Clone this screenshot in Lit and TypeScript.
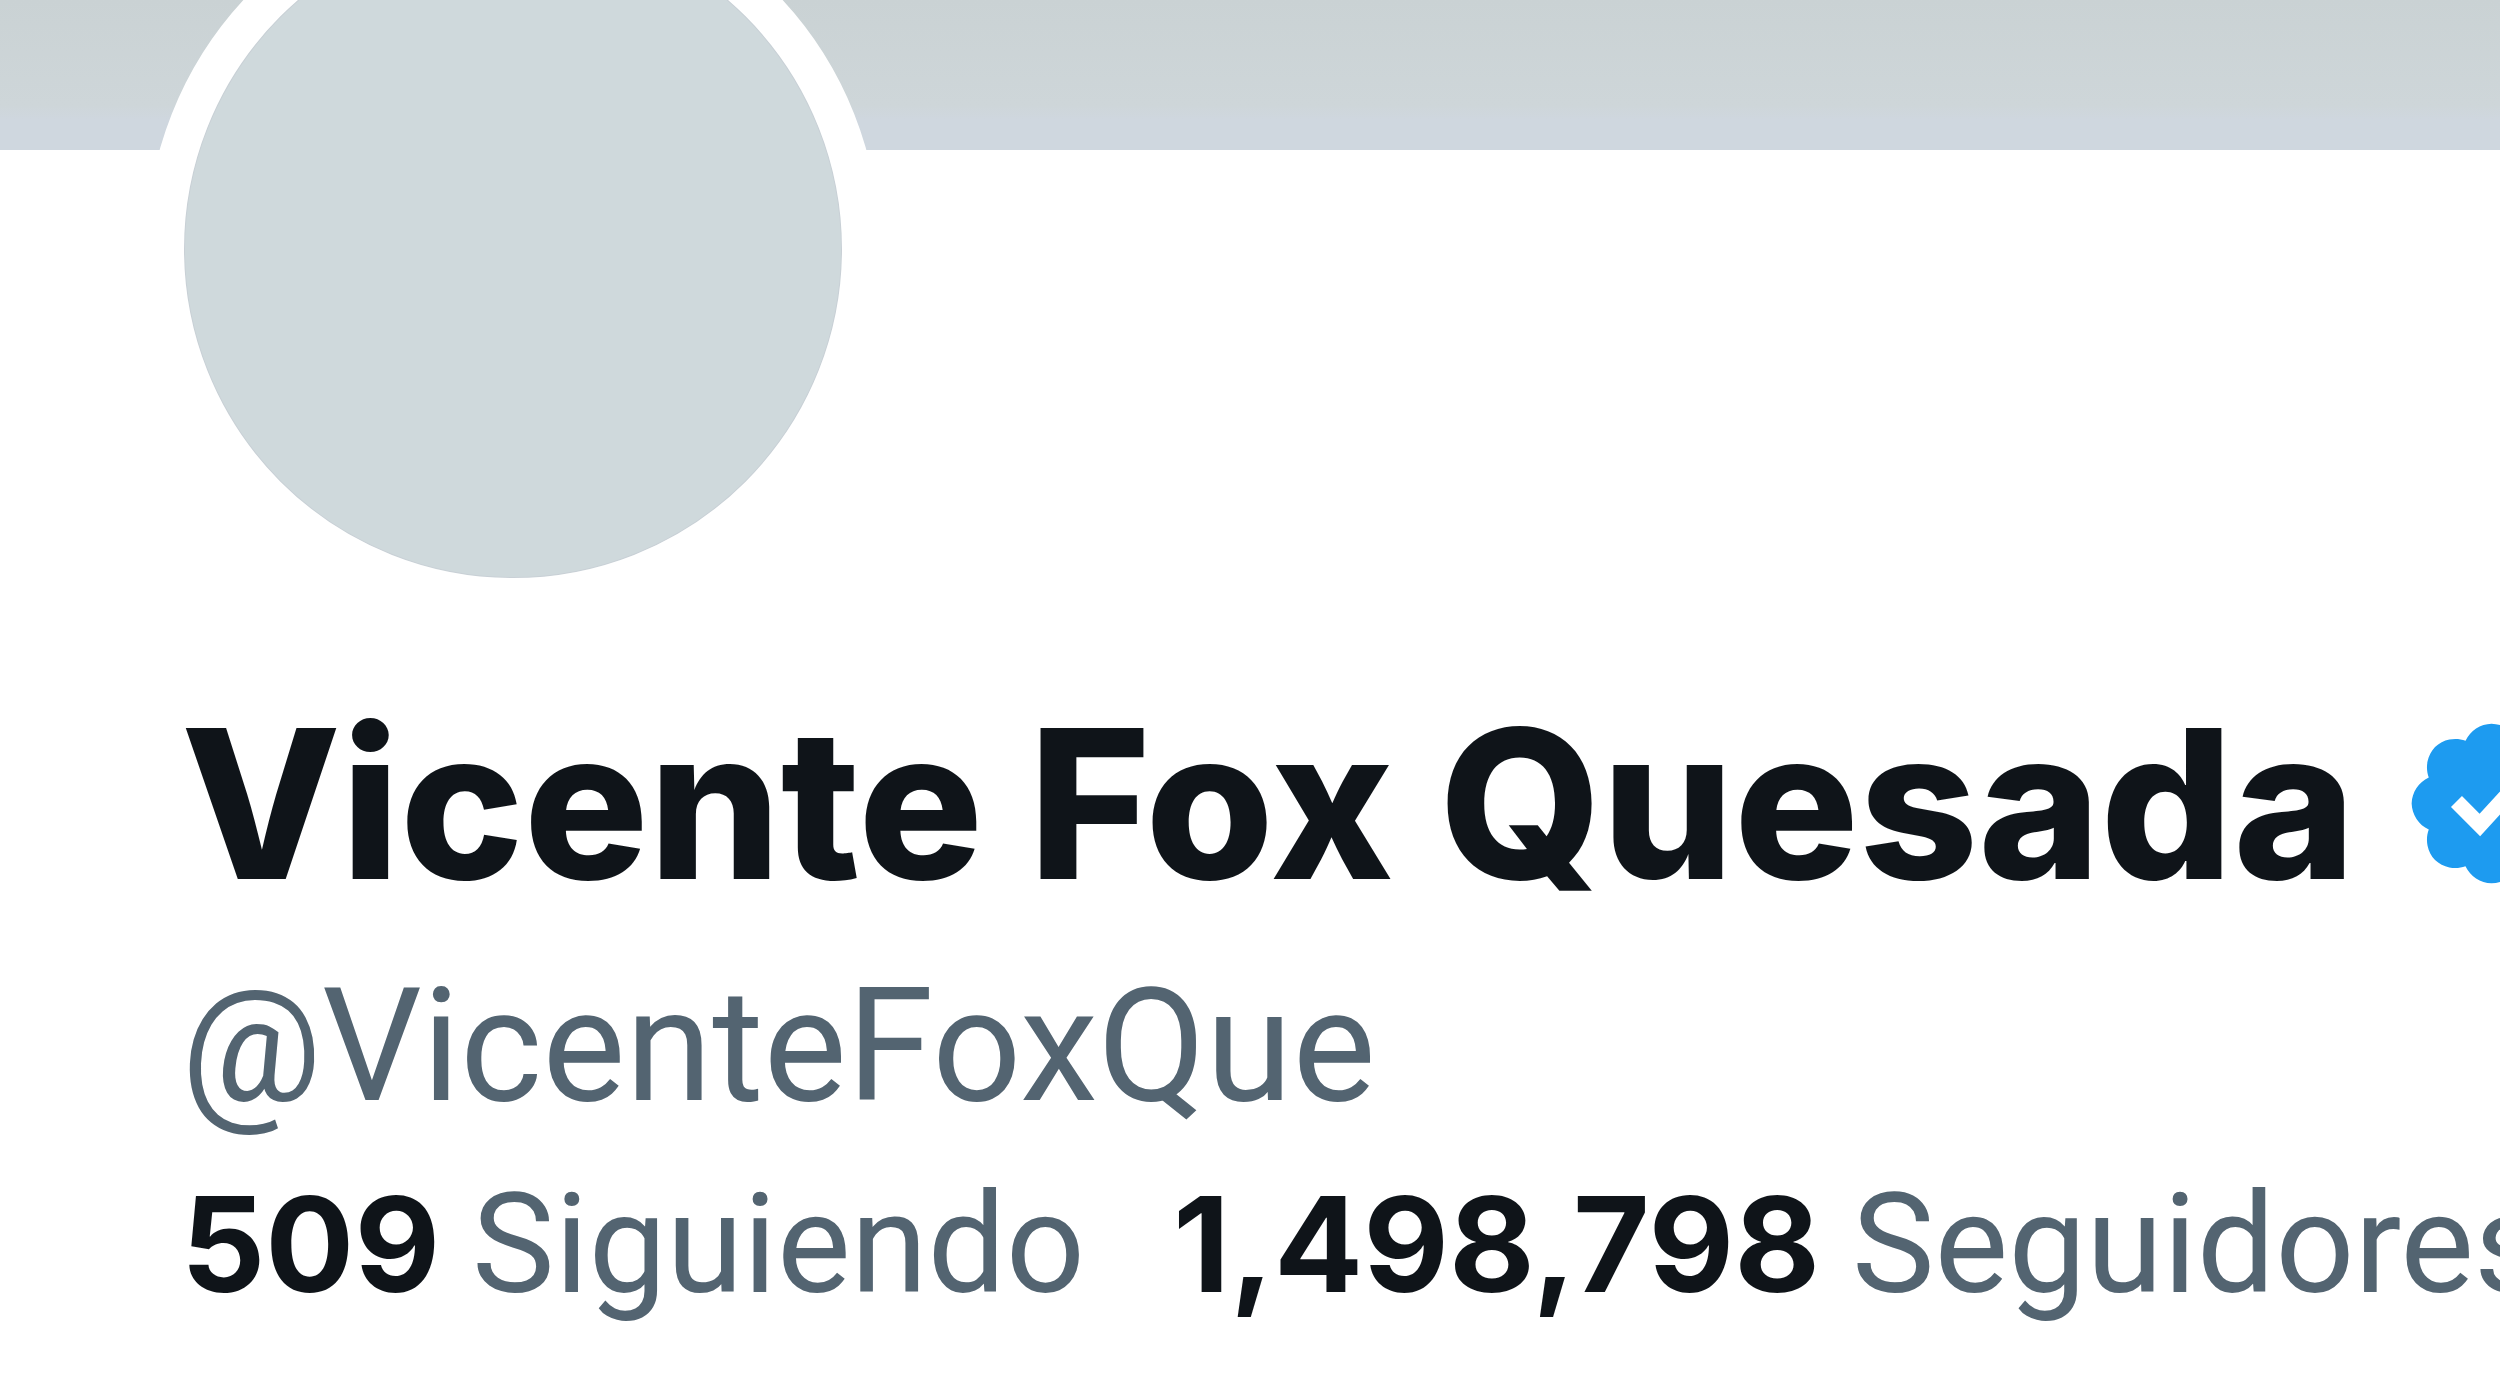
import { LitElement, html, css } from "lit";
import { customElement, property } from "lit/decorators.js";

@customElement("verified-badge")
class VerifiedBadge extends LitElement {
  static styles = css`
    :host {
      display: block;
      flex: none;
    }
    .icon {
      display: block;
      width: 187px;
      height: 187px;
      fill: #1d9bf0;
    }
  `;

  render() {
    return html`
      <svg class="icon" viewBox="0 0 22 22" aria-hidden="true">
        <path
          d="M20.396 11c-.018-.646-.215-1.275-.57-1.816-.354-.54-.852-.972-1.438-1.246.223-.607.27-1.264.14-1.897-.131-.634-.437-1.218-.882-1.687-.47-.445-1.053-.75-1.687-.882-.633-.13-1.29-.083-1.897.14-.273-.587-.704-1.086-1.245-1.44S11.647 1.62 11 1.604c-.646.017-1.273.213-1.813.568s-.969.854-1.24 1.44c-.608-.223-1.267-.272-1.902-.14-.635.13-1.22.436-1.69.882-.445.47-.749 1.055-.878 1.688-.13.633-.08 1.29.144 1.896-.587.274-1.087.705-1.443 1.245-.356.54-.555 1.17-.574 1.817.02.647.218 1.276.574 1.817.356.54.856.972 1.443 1.245-.224.606-.274 1.263-.144 1.896.13.634.433 1.218.877 1.688.47.443 1.054.747 1.687.878.633.132 1.29.084 1.897-.136.274.586.705 1.084 1.246 1.439.54.354 1.17.551 1.816.569.647-.016 1.276-.213 1.817-.567s.972-.854 1.245-1.44c.604.239 1.266.296 1.903.164.636-.132 1.22-.447 1.68-.907.46-.46.776-1.044.908-1.681s.075-1.299-.165-1.903c.586-.274 1.084-.705 1.439-1.246.354-.54.551-1.17.569-1.816zM9.662 14.85l-3.429-3.428 1.293-1.302 2.072 2.072 4.4-4.794 1.347 1.246z"
        />
      </svg>
    `;
  }
}

@customElement("profile-stat")
class ProfileStat extends LitElement {
  @property() count = "";
  @property() label = "";

  static styles = css`
    :host {
      display: block;
      flex: none;
    }
    .link {
      display: flex;
      align-items: baseline;
      gap: 32px;
      line-height: 150px;
      white-space: nowrap;
      text-decoration: none;
    }
    .count {
      color: #0f1419;
      font-family: Inter, "Liberation Sans", sans-serif;
      font-size: 132px;
      font-weight: 700;
    }
    .label {
      color: #536471;
      font-family: Roboto, "Liberation Sans", sans-serif;
      font-size: 139px;
      font-weight: 400;
    }
  `;

  render() {
    return html`
      <a class="link" href="#">
        <span class="count">${this.count}</span>
        <span class="label">${this.label}</span>
      </a>
    `;
  }
}

@customElement("app-root")
class AppRoot extends LitElement {
  static styles = css`
    :host {
      display: block;
      min-height: 100vh;
      overflow: hidden;
      background: #fff;
      color: #0f1419;
    }
    .banner {
      height: 150px;
      background: linear-gradient(#cad2d4, #ced6d9 70%, #cfd7df 80%, #cfd7df);
    }
    .profile {
      display: flex;
      flex-direction: column;
      align-items: flex-start;
      gap: 20px;
      padding: 0 0 80px 181px;
    }
    .avatar {
      box-sizing: border-box;
      width: 734px;
      height: 734px;
      margin: -268px 0 47px -35px;
      border: 38px solid #fff;
      border-radius: 50%;
      background: #cfd9dc;
      box-shadow: inset 0 0 0 1px #c9d0d6;
    }
    .identity {
      display: flex;
      align-items: center;
      gap: 42px;
      height: 240px;
    }
    .name {
      margin: 0;
      font-family: Inter, "Liberation Sans", sans-serif;
      font-size: 208px;
      font-weight: 800;
      line-height: 240px;
      white-space: nowrap;
    }
    .handle {
      color: #536471;
      font-family: Roboto, "Liberation Sans", sans-serif;
      font-size: 157px;
      line-height: 206px;
    }
    .stats {
      display: flex;
      gap: 88px;
    }
  `;

  private stats = [
    { count: "509", label: "Siguiendo" },
    { count: "1,498,798", label: "Seguidores" },
  ];

  render() {
    return html`
      <div class="banner"></div>
      <main class="profile">
        <div class="avatar"></div>
        <div class="identity">
          <h1 class="name">Vicente Fox Quesada</h1>
          <verified-badge></verified-badge>
        </div>
        <div class="handle">@VicenteFoxQue</div>
        <nav class="stats">
          ${this.stats.map(
            (s) => html`<profile-stat .count=${s.count} .label=${s.label}></profile-stat>`
          )}
        </nav>
      </main>
    `;
  }
}
